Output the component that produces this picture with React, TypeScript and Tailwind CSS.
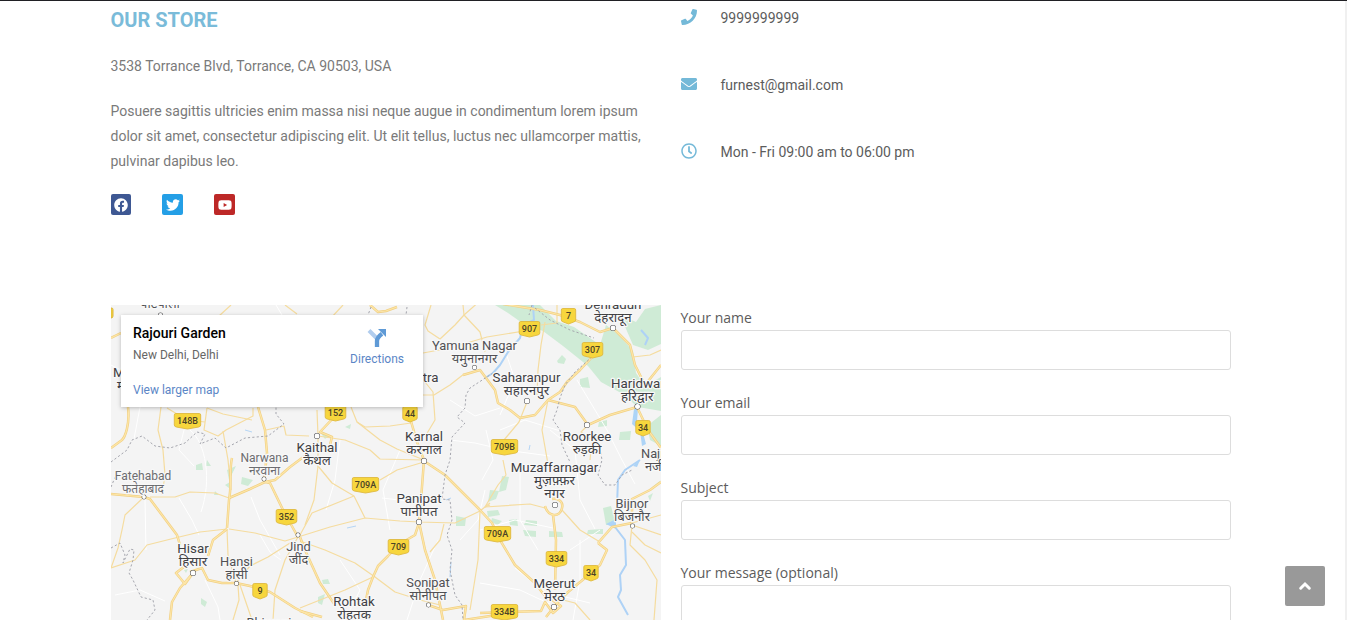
import React from "react";
import { FaPhoneAlt, FaEnvelope, FaRegClock, FaFacebook, FaTwitter, FaYoutube, FaPhone } from "react-icons/fa";

const majorRoads = [
  "M128 407C130 425 125 437 122 440L111 448", "M111 338L121 333",
  "M258 407L265 430L267 453L264 482", "M111 494L144 497L150 499L162 515L177 535L180 545",
  "M229 498L250 489L265 482L275 480L290 467L306 455", "M232 458C229 470 232 485 229 500L227 528",
  "M227 529L213 540L208 556", "M190 572L202 568L208 580L222 583L236 583L250 586L270 592L295 608L313 617",
  "M185 566L176 573L185 584L193 573L180 588L172 602L170 620", "M265 482L270 483L284 512L298 537",
  "M337 414L320 432L332 437L330 445", "M370 305L378 312L386 311L397 307",
  "M410 418L417 442L424 460L421 500L419 522L425 550L435 580L443 620",
  "M424 461L445 475L460 490L480 510L492 523L500 540L515 565L535 583L548 600",
  "M419 523L415 535L398 545L388 556L378 566L373 577L368 590L365 605", "M300 537L305 550L320 583L335 605",
  "M503 304L540 310L560 315L580 322L600 332L613 328L630 345L635 365L645 385L661 365",
  "M594 355L580 370L567 382L560 392L548 400L535 415L520 418L510 410L498 403L495 390L480 370L463 375",
  "M548 400L575 407L588 425L610 415L637 407L648 430L661 448",
  "M553 515L556 540L555 590", "M545 506C548 517 560 518 562 508C564 501 557 498 552 499",
  "M598 543L612 527L632 523", "M598 543L607 550L600 565L585 578L568 592L558 602L546 617",
  "M480 613L541 611L545 602L553 613L561 606L552 600", "M428 605L443 610L466 606L464 620L510 613",
  "M632 523L632 499L650 490L661 482", "M300 611L322 617",
];
const minorRoads = [
  "M161 407L158 430L163 450L165 475L162 495", "M167 408L187 420L205 422", "M207 408L204 430L218 436L226 430L253 416L253 408",
  "M207 408L223 414L252 420", "M223 431L228 460L231 490", "M266 430L284 426L286 435L309 436", "M150 497L175 497L190 492L215 493L229 498",
  "M227 529L200 532L175 538L147 545L135 560L111 568", "M229 529L255 533L285 541L298 537L330 527L365 518L400 521L419 522L455 523L480 511L490 503",
  "M144 497L125 515L122 530L118 548L111 568", "M227 529L228 555L236 583L250 566L268 557L290 543", "M238 585L239 600L233 620M240 585L252 620",
  "M298 537L285 560L275 590L273 620", "M343 305L331 318M231 305L219 316", "M285 305L297 314M431 305L425 325L428 331L440 339L455 325L464 315L481 300",
  "M463 305L464 315L480 332L485 352", "M423 353L450 348L487 337L530 330", "M423 395L434 395L450 385L464 374", "M425 382L433 392L435 420L426 435",
  "M317 410L318 436L345 440L370 450L380 459L424 460", "M351 407L357 422L365 427L390 426L411 423", "M357 422L380 440L397 449L424 460",
  "M380 480L397 470L424 462M318 437L318 466L332 483L354 496L365 518", "M354 496L312 513L300 535", "M318 466L314 500L305 525",
  "M444 524L440 540L430 552", "M300 541L325 550L355 563L375 577L395 592L420 600L440 605", "M300 608L345 590L375 576",
  "M480 511L478 560L470 610M490 505L485 507", "M545 322L541 345L538 370L537 395M527 402L519 422L504 440", "M557 305L557 323L541 325",
  "M548 400L542 430L549 470M588 425L581 432L592 440L590 460", "M633 357L650 355L661 350", "M503 460L506 475L498 485L485 507L530 504L545 508",
  "M562 510L580 530L600 542", "M632 523L661 515M632 525L630 545L645 560L657 580L654 620", "M632 532L645 545L661 553M632 525L661 535",
  "M563 600L575 603L590 620",
];
const pale = [
  "M111 365L121 370M140 407L134 439M184 430L179 450L194 466M276 305L282 315", "M190 430C206 443 212 480 201 512M145 500L146 550",
  "M179 498L192 520L199 535M205 580L218 607L220 620", "M251 497L260 520L280 555M260 535L270 552L281 560", "M115 595L140 590L165 601",
  "M340 440L335 480L326 510M382 498L425 503", "M450 440L475 443L505 450L550 456", "M450 400L475 416L500 408M486 430L493 460L482 480",
  "M480 583L520 590L550 604M515 568L545 592L590 603", "M580 540L580 580L573 620M570 550L600 530", "M550 430L575 450L580 500L595 529",
  "M500 430L525 420L570 434M505 350L515 380L500 415", "M460 540L478 520L485 490M480 530L515 520L553 528", "M577 380L607 430L622 460L635 484",
  "M340 560L360 590L345 620M438 540L420 580L407 620", "M390 530L383 490L400 450M520 470L520 520L538 550",
];
const borders = [
  "M111 462L127 450L132 440L142 436L155 446L170 448L185 443L197 432L205 434L200 444L215 438L226 448L245 438L268 436L284 424L276 414L276 407",
  "M111 487L116 475L123 470M111 548L120 543L125 555L123 563L130 549L134 550L133 560L129 573L133 580L141 597L153 600L155 610L147 620",
  "M493 373L470 388L466 395L465 408L457 417L465 423L452 437L450 460L445 475L442 499L450 500L452 520L447 535L452 550L450 570L455 595L462 605L463 620",
  "M535 308L550 320L570 330L594 338M592 357L575 372L565 385L560 398L557 410L553 420L560 430L562 445L570 462",
  "M600 448L602 460L598 475L605 485L615 485L622 475L632 470", "M371 307L368 315M407 307L406 315M532 305L529 315",
];
const greens = [
  "M495 305H540L556 321L574 327L600 345L606 325L619 335L633 351L636 373L645 386L661 377V411L638 407L621 393L601 382L588 366L563 346L543 331L525 325L508 313Z",
  "M620 315L636 322L645 309L661 305V344L648 350L633 345Z", "M557 361L562 355L566 359L564 364L558 363Z",
  "M580 379L588 377L590 388L580 387Z", "M599 422L607 420L607 426L598 427ZM620 432L631 431L630 440L619 440Z",
  "M502 476L509 477L506 490L499 492ZM490 490L499 491L496 499L488 502ZM487 511L498 510L500 515L488 517ZM492 518L502 521L498 525L491 522Z",
  "M509 520L517 519L518 526L510 525ZM526 520L537 521L537 526L524 525ZM523 530L536 531L536 537L525 536ZM549 531L562 532L563 537L549 537ZM588 530L603 529L603 534L587 534Z",
  "M603 508L611 506L616 525L606 525ZM648 496L653 493L650 501ZM661 480L651 488L658 484Z",
  "M196 465L202 463L203 470L196 470ZM207 460L211 466L206 466ZM227 470L236 466L229 480ZM225 485L230 482L229 488ZM242 477L253 480L248 486L241 484ZM215 491L219 495L214 495Z",
  "M201 598L207 602L205 607L201 604ZM322 580L328 579L330 584L323 584ZM318 597L325 594L322 605L318 603Z",
  "M456 516L466 518L465 526L456 526ZM345 427L351 424L350 429ZM320 432L330 435L325 439ZM184 570L188 569L186 573Z",
  "M661 415L647 426L650 440L661 446ZM597 448L601 447L601 451Z",
];
const rivers = [
  "M533 305L534 320L523 325L520 338L508 352L500 365L493 373L485 378", "M645 345L648 338L641 330",
  "M640 460L625 470L618 480L617 505", "M615 527L625 540L626 565L620 575L621 590L618 597L628 615",
];
const streams = ["M245 430L252 432", "M347 528L356 526", "M529 450L530 445", "M446 500L451 498", "M451 562L450 577"];

type Place = { x: number; y: number; name: string; hindi?: string[]; dot?: [number, number]; size?: number; start?: boolean; hindiX?: number };
const places: Place[] = [
  { x: 474.5, y: 350, name: "Yamuna Nagar", hindi: ["यमुनानगर"], dot: [474.5, 367.5], size: 12.9 },
  { x: 526.5, y: 382, name: "Saharanpur", hindi: ["सहारनपुर"], dot: [527, 401] },
  { x: 613, y: 309, name: "Dehradun", hindi: ["देहरादून"], dot: [613, 328] },
  { x: 611, y: 388, name: "Haridwar", hindi: ["हरिद्वार"], dot: [637.5, 406.5], start: true, hindiX: 621 },
  { x: 587, y: 441, name: "Roorkee", hindi: ["रुड़की"], dot: [587, 425] },
  { x: 424, y: 441, name: "Karnal", hindi: ["करनाल"], dot: [424, 461] },
  { x: 317, y: 452, name: "Kaithal", hindi: ["कैथल"], dot: [317, 436] },
  { x: 264.5, y: 462, name: "Narwana", hindi: ["नरवाना"], dot: [264, 479], size: 12 },
  { x: 143, y: 480, name: "Fatehabad", hindi: ["फतेहाबाद"], dot: [144, 497], size: 12 },
  { x: 554.5, y: 472, name: "Muzaffarnagar", hindi: ["मुज़फ़्फ़र", "नगर"], dot: [555, 505] },
  { x: 419, y: 503, name: "Panipat", hindi: ["पानीपत"], dot: [419, 522] },
  { x: 632, y: 508, name: "Bijnor", hindi: ["बिजनौर"], dot: [632.5, 526], size: 12.8 },
  { x: 193, y: 553, name: "Hisar", hindi: ["हिसार"], dot: [193, 573] },
  { x: 236.5, y: 566, name: "Hansi", hindi: ["हांसी"], dot: [236.5, 583.5], size: 12.8 },
  { x: 298.5, y: 551, name: "Jind", hindi: ["जींद"], dot: [298, 535], size: 12.8 },
  { x: 428, y: 587, name: "Sonipat", hindi: ["सोनीपत"], dot: [428.5, 605], size: 12.8 },
  { x: 354, y: 606, name: "Rohtak", hindi: ["रोहतक"] },
  { x: 554.5, y: 588, name: "Meerut", hindi: ["मेरठ"], dot: [554, 607] },
  { x: 641, y: 458, name: "Najibabad", hindi: ["नजीबाबाद"], start: true, size: 12.8 },
  { x: 269, y: 627, name: "Bhiwani", size: 12.8 },
  { x: 403, y: 382, name: "Kurukshetra" },
  { x: 113, y: 377, name: "Mansa", hindi: ["मानसा"], start: true },
  { x: 160, y: 295, name: "Patiala", hindi: ["पटियाला"], dot: [160.5, 315], size: 12.8 },
];
const shields: [number, number, string][] = [
  [529.5, 329, "907"], [568.5, 316, "7"], [592.5, 350, "307"], [187.5, 421, "148B"], [335.5, 413, "152"], [410, 414, "44"], [643, 428, "34"],
  [504.5, 447, "709B"], [365.5, 485, "709A"], [286.5, 517, "352"], [398.5, 547, "709"], [497.5, 534, "709A"], [556.5, 559, "334"], [591, 573, "34"],
  [260, 591, "9"], [504.5, 612, "334B"],
];

function StoreMap() {
  return (
    <svg className="block h-full w-full" viewBox="111 305 550 315" fill="none" strokeLinejoin="round">
      <rect x="111" y="305" width="550" height="315" fill="#f4f4f4" />
      <g fill="#cfebd6">{greens.map((d) => <path key={d} d={d} />)}</g>
      <g stroke="#fff" strokeWidth="1">{pale.map((d) => <path key={d} d={d} />)}</g>
      <g stroke="#aed2f6" strokeWidth="2">{rivers.map((d) => <path key={d} d={d} />)}</g>
      <g stroke="#b5d5f5" strokeWidth="1">{streams.map((d) => <path key={d} d={d} />)}</g>
      <path d="M634 409L632 424L640 431L642 446L646 444L642 429L637 421L638 409ZM606 524L616 519L616 529ZM640 460L633 466L637 467Z" fill="#add4f7" />
      <g stroke="#f5dc9f" strokeWidth="1.2">{minorRoads.map((d) => <path key={d} d={d} />)}</g>
      <g stroke="#f1d084" strokeWidth="2.5">{majorRoads.map((d) => <path key={d} d={d} />)}</g>
      <g stroke="#fde6a8" strokeWidth="1.2">{majorRoads.map((d) => <path key={d} d={d} />)}</g>
      <g stroke="#a5a6ae" strokeWidth="1" strokeDasharray="2.2 2.2">{borders.map((d) => <path key={d} d={d} />)}</g>
      <path d="M111 308H111.5Q113 308 113 309.5V316Q113 318 111 318Z" fill="#f7d63d" stroke="#d9b43c" />
      {shields.map(([x, y, label]) => {
        const w = label.length < 3 ? 7.2 : label.length === 3 ? 10.3 : 13.2;
        return (
          <g key={`${x}-${y}`}>
            <path
              d={`M${x - w + 1.5} ${y - 7.5}H${x + w - 1.5}Q${x + w} ${y - 7.5} ${x + w} ${y - 6}V${y + 4}Q${x + w} ${y + 5.5} ${x + w - 2} ${y + 6}L${x} ${y + 8}L${x - w + 2} ${y + 6}Q${x - w} ${y + 5.5} ${x - w} ${y + 4}V${y - 6}Q${x - w} ${y - 7.5} ${x - w + 1.5} ${y - 7.5}Z`}
              fill="#f7d63d" stroke="#dfb93f" strokeWidth="0.9"
            />
            <text x={x} y={y + 3.3} textAnchor="middle" fontSize="9" fontWeight="500" fill="#4b4326" className="font-['Roboto',sans-serif]">{label}</text>
          </g>
        );
      })}
      {places.map((p) => {
        const size = p.size ?? 13.3;
        const color = size < 12.4 ? "#6c6c70" : size < 13 ? "#505054" : "#404044";
        return (
          <g key={p.name} className="font-['Roboto','Noto_Sans',sans-serif]" stroke="#f8f8f8" strokeWidth="2.5" paintOrder="stroke" fill={color}>
            {p.dot && <circle cx={p.dot[0]} cy={p.dot[1]} r={size < 13 ? 1.9 : 2.5} fill="#fff" stroke="#4b4b4e" strokeWidth="1.1" />}
            <text x={p.x} y={p.y} textAnchor={p.start ? "start" : "middle"} fontSize={size}>{p.name}</text>
            {p.hindi?.map((h, i) => (
              <text key={h} x={p.hindiX ?? p.x + (p.start ? 4 : 0)} y={p.y + 12.5 + i * 13} textAnchor={p.start ? "start" : "middle"} fontSize={size}>{h}</text>
            ))}
          </g>
        );
      })}
    </svg>
  );
}

function MapCard() {
  return (
    <div className="absolute left-[10px] top-[10px] flex h-[92px] w-[302px] justify-between bg-white pl-3 pr-[19px] text-[12px] shadow-[0_1px_4px_rgba(0,0,0,0.25)]">
      <div className="flex flex-col pt-[10px]">
        <div className="text-[14px] font-medium leading-4 text-black">Rajouri Garden</div>
        <div className="mt-[6px] leading-4 text-[#666]">New Delhi, Delhi</div>
        <a className="mt-[19px] leading-4 text-[#5b86c6]">View larger map</a>
      </div>
      <div className="flex flex-col items-center pt-3">
        <svg className="h-[22px] w-[22px]" viewBox="0 0 22 22" fill="none">
          <path d="M3 3.5L11 11.5" stroke="#b1cdee" strokeWidth="4" />
          <path d="M11 20V14Q11 10.5 16 6.8" stroke="#5f9ad6" strokeWidth="4.3" />
          <path d="M12 2H20V10Z" fill="#5f9ad6" />
        </svg>
        <a className="mt-[2px] leading-4 text-[#5b86c6]">Directions</a>
      </div>
    </div>
  );
}

const contacts = [
  { Icon: FaPhone, text: "9999999999" },
  { Icon: FaEnvelope, text: "furnest@gmail.com" },
  { Icon: FaRegClock, text: "Mon - Fri 09:00 am to 06:00 pm" },
];

export default function App() {
  return (
    <div className="relative h-[620px] w-[1347px] overflow-hidden border-t border-[#202024] bg-white font-['Roboto',sans-serif] text-[14px]">
      <div className="ml-[110.5px] flex h-[304px] gap-5">
        <section className="w-[550px] text-[#7a7a7a]">
          <h2 className="pt-[5px] text-[20px] font-bold leading-7 text-[#7abbd9]">OUR STORE</h2>
          <p className="mt-5 leading-[25px]">3538 Torrance Blvd, Torrance, CA 90503, USA</p>
          <p className="mt-5 whitespace-nowrap leading-[25px]">
            Posuere sagittis ultricies enim massa nisi neque augue in condimentum lorem ipsum<br />
            dolor sit amet, consectetur adipiscing elit. Ut elit tellus, luctus nec ullamcorper mattis,<br />
            pulvinar dapibus leo.
          </p>
          <div className="mt-5 flex gap-[31px] pl-[0.5px] text-[14px] text-white">
            <a className="flex h-[21px] w-5 items-center justify-center rounded-[2px] bg-[#3e5893]"><FaFacebook /></a>
            <a className="flex h-[21px] w-[21px] items-center justify-center rounded-[2px] bg-[#249fe6]"><FaTwitter /></a>
            <a className="flex h-[21px] w-[21px] items-center justify-center rounded-[2px] bg-[#bd2827]"><FaYoutube /></a>
          </div>
        </section>
        <section className="flex w-[550px] flex-col gap-[42px] pt-[5px] text-[#5c5c5c]">
          {contacts.map(({ Icon, text }) => (
            <div key={text} className="flex h-[25px] items-center">
              <Icon className="mb-[3px] h-4 w-4 text-[#74b9d8]" />
              <span className="ml-6">{text}</span>
            </div>
          ))}
        </section>
      </div>
      <div className="ml-[111px] flex h-[315px] gap-5">
        <section className="relative h-[315px] w-[550px] overflow-hidden">
          <StoreMap />
          <MapCard />
        </section>
        <form className="w-[550px] font-['Open_Sans',sans-serif] text-[#5c5c5c]">
          {["Your name", "Your email", "Subject", "Your message (optional)"].map((label) => (
            <label key={label} className="block h-[85px]">
              <span className="-ml-[0.5px] block h-[25px] leading-[26px]">{label}</span>
              <input className="block h-10 w-full rounded-[3px] border border-[#ddd] bg-white" />
            </label>
          ))}
        </form>
      </div>
      <button className="absolute left-[1285px] top-[565px] flex h-10 w-10 items-center justify-center rounded-[2px] bg-[#999]">
        <svg className="h-3 w-[14px]" viewBox="0 0 14 12" fill="none"><path d="M2.7 8.2L7 4L11.3 8.2" stroke="#fff" strokeWidth="3" strokeLinecap="round" strokeLinejoin="miter" /></svg>
      </button>
      <div className="absolute right-0 top-0 h-full w-[2px] bg-[#f0f0f0]" />
    </div>
  );
}
